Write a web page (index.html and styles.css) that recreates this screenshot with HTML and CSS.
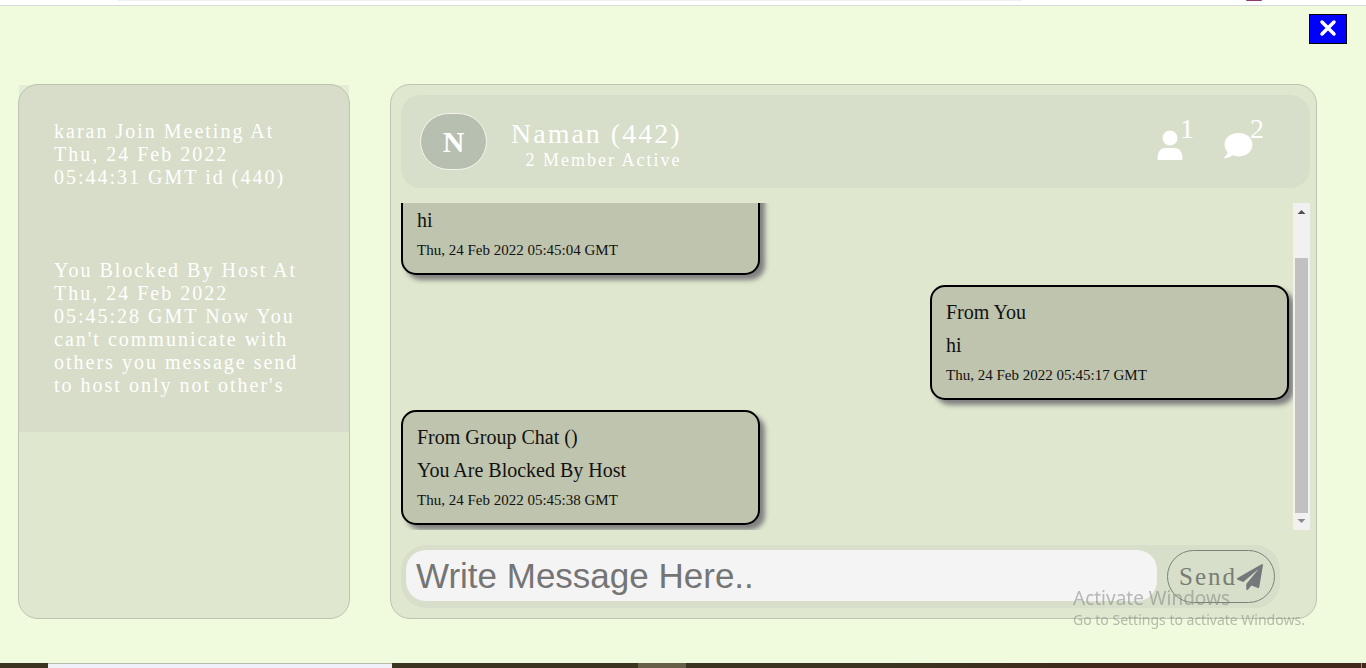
FILE: index.html
```html
<!DOCTYPE html>
<html lang="en">
<head>
<meta charset="utf-8">
<title>Meeting Chat</title>
<link rel="stylesheet" href="styles.css">
</head>
<body>
<div class="browser-edge"><span class="address-edge"></span><span class="profile-edge"></span></div>
<main class="page">
  <button class="close" type="button" aria-label="Close">
    <svg viewBox="0 0 20 20" width="20" height="20" aria-hidden="true"><path d="M4 4L16 16M16 4L4 16"/></svg>
  </button>
  <div class="columns">
    <aside class="log">
      <p class="log-item">karan Join Meeting At Thu, 24 Feb 2022 05:44:31 GMT id (440)</p>
      <p class="log-item">You Blocked By Host At Thu, 24 Feb 2022 05:45:28 GMT Now You can't communicate with others you message send to host only not other's</p>
    </aside>
    <section class="chat">
      <header class="chat-header">
        <div class="avatar">N</div>
        <div class="who">
          <h1 class="name">Naman (442)</h1>
          <p class="active">2 Member Active</p>
        </div>
        <div class="counters">
          <button class="counter" type="button" aria-label="Members: 1">
            <svg viewBox="0 0 26 30" width="26" height="30" aria-hidden="true"><circle cx="13" cy="8" r="7.5"/><path d="M.5 28.500C.5 21 4 18 9 18H17C22 18 25.500 21 25.500 28.500Q25.500 30 24 30H2Q.5 30 .5 28.500Z"/></svg><span>1</span>
          </button>
          <button class="counter" type="button" aria-label="Messages: 2">
            <svg viewBox="0 0 30 30" width="30" height="30" aria-hidden="true"><path d="M15.500 3C7.500 3 1.500 7.800 1.500 14.500C1.500 17.500 2.700 20.200 4.700 22.200C4.200 24.400 2.900 25.700 1.200 27.200Q.7 28.200 1.700 28.300C4.800 28.200 7.500 26.900 9.300 25.300C11.200 26 13.300 26.400 15.500 26.400C23.500 26.400 29.500 21.200 29.500 14.700C29.500 7.800 23.500 3 15.500 3Z"/></svg><span>2</span>
          </button>
        </div>
      </header>
      <div class="feed">
        <div class="messages">
          <article class="message">
            <p>hi</p>
            <time>Thu, 24 Feb 2022 05:45:04 GMT</time>
          </article>
          <article class="message own">
            <p>From You</p>
            <p>hi</p>
            <time>Thu, 24 Feb 2022 05:45:17 GMT</time>
          </article>
          <article class="message">
            <p>From Group Chat ()</p>
            <p>You Are Blocked By Host</p>
            <time>Thu, 24 Feb 2022 05:45:38 GMT</time>
          </article>
        </div>
        <div class="scrollbar" aria-hidden="true">
          <svg class="arrow" viewBox="0 0 17 17"><path d="M4.500 11L8.500 7L12.500 11Z"/></svg>
          <span class="track"><span class="thumb"></span></span>
          <svg class="arrow down" viewBox="0 0 17 17"><path d="M4.500 6L8.500 10L12.500 6Z"/></svg>
        </div>
      </div>
      <form class="composer">
        <input class="entry" type="text" placeholder="Write Message Here.." aria-label="Message">
        <button class="send" type="button">Send<svg viewBox="0 0 1792 1792" width="26" height="26" aria-hidden="true"><path d="M1764 11q33 24 27 64l-256 1536q-5 29-32 45-14 8-31 8-11 0-24-5l-453-185-242 295q-18 23-49 23-13 0-22-4-19-7-30.500-23.500T640 1728v-349l864-1059L435 1245 40 1083q-37-14-40-55-3-39 32-59L1696 9q15-9 32-9 20 0 36 11z"/></svg></button>
      </form>
    </section>
  </div>
</main>
<div class="taskbar"><span class="search"></span><span class="running"></span><span class="desktop"></span></div>
<div class="watermark"><p class="mark-title">Activate Windows</p><p class="mark-text">Go to Settings to activate Windows.</p></div>
</body>
</html>
```
FILE: styles.css
```css
* { box-sizing: border-box; }
body {
  margin: 0;
  height: 100vh;
  display: flex;
  flex-direction: column;
  background: #f0fadd;
  font-family: "Liberation Serif", "Times New Roman", serif;
  font-size: 20px;
  line-height: 23px;
}
p, h1 { margin: 0; font-weight: normal; }
button { font: inherit; padding: 0; cursor: pointer; }

.browser-edge {
  flex: none;
  height: 6px;
  display: flex;
  align-items: flex-start;
  padding: 0 104px 0 118px;
  justify-content: space-between;
  background: #fff;
  border-bottom: 1px solid #d9dbd8;
}
.address-edge { width: 79%; height: 1px; background: #eef0f3; }
.profile-edge { width: 16px; height: 1px; border-radius: 0 0 8px 8px; background: #8a3d68; }

.page {
  flex: 1;
  min-height: 0;
  display: flex;
  flex-direction: column;
  gap: 40px;
  padding: 8px 49px 44px 18px;
}
.close {
  flex: none;
  align-self: flex-end;
  width: 38px;
  height: 30px;
  margin-right: -30px;
  display: flex;
  align-items: center;
  justify-content: center;
  background: #00f;
  border: 1px solid #000;
}
.close svg { fill: none; stroke: #fff; stroke-width: 3.5; stroke-linecap: round; margin-bottom: 2px; }
.columns {
  flex: 1;
  min-height: 0;
  display: grid;
  grid-template-columns: 332fr 927fr;
  grid-template-rows: minmax(0, 1fr);
  gap: 40px;
}
.log, .chat {
  background: #dfe8ce;
  border: 1px solid #bdc4b2;
  border-radius: 20px;
}
.log-item {
  padding: 35px;
  background: rgba(183, 182, 181, .2);
  color: #fff;
  letter-spacing: 2px;
}

.chat {
  display: flex;
  flex-direction: column;
  gap: 15px;
  padding: 10px 6px 10px 10px;
}
.chat-header {
  flex: none;
  height: 93px;
  display: flex;
  align-items: center;
  gap: 24px;
  padding: 0 46px 0 19px;
  background: #d7dec9;
  border-radius: 20px;
  color: #fff;
}
.avatar {
  width: 67px;
  height: 57px;
  display: flex;
  align-items: center;
  justify-content: center;
  background: #b7c0b0;
  border: 1px solid #f4f6ee;
  border-radius: 30px;
  font-size: 30px;
  font-weight: bold;
}
.who { text-align: right; letter-spacing: 2px; padding-top: 4px; }
.name { font-size: 28px; line-height: 32px; }
.active { font-size: 18px; line-height: 20px; }
.counters { margin-left: auto; padding-bottom: 6px; display: flex; gap: 29px; }
.counter {
  display: flex;
  align-items: flex-end;
  height: 43px;
  background: none;
  border: 0;
  color: #fff;
}
.counter svg { fill: #fff; }
.counter span { align-self: flex-start; margin-left: -3px; font-size: 28px; line-height: 24px; }

.feed { flex: 1; min-height: 0; display: flex; }
.messages {
  flex: 1;
  display: flex;
  flex-direction: column;
  justify-content: flex-end;
  gap: 10px;
  padding: 0 4px 5px 0;
  overflow: hidden;
}
.message {
  flex: none;
  width: 359px;
  max-width: 100%;
  min-height: 115px;
  display: flex;
  flex-direction: column;
  justify-content: flex-end;
  gap: 10px;
  padding: 14px;
  background: #bec4ad;
  border: 2px solid #000;
  border-radius: 15px;
  box-shadow: 5px 5px 5px #808080;
  color: #111;
}
.own { align-self: flex-end; }
.message time { font-size: 15px; line-height: 17px; }
.scrollbar { width: 17px; display: flex; flex-direction: column; background: #f1f1f1; }
.arrow { flex: none; width: 17px; height: 17px; fill: #505050; }
.down { fill: #8b8b8b; }
.track { flex: 1; display: flex; flex-direction: column; justify-content: flex-end; padding: 0 2px; }
.thumb { height: 87%; background: #c1c1c1; }

.composer {
  flex: none;
  display: flex;
  align-items: flex-start;
  gap: 10px;
  margin-right: 30px;
  padding: 5px;
  background: #d7dec9;
  border-radius: 25px;
}
.entry {
  flex: 1;
  min-width: 0;
  height: 51px;
  padding: 0 10px;
  border: 0;
  border-radius: 20px;
  background: #f4f4f4;
  font: 35px "Liberation Sans", Arial, sans-serif;
}
.entry::placeholder { color: #757575; opacity: 1; }
.send {
  width: 108px;
  height: 53px;
  display: flex;
  align-items: center;
  justify-content: center;
  background: none;
  border: 1px solid #7c8278;
  border-radius: 27px;
  color: #787d74;
  font-size: 25px;
  letter-spacing: 2px;
}
.send svg { fill: #74787a; }

.taskbar {
  flex: none;
  height: 5px;
  display: flex;
  background: linear-gradient(90deg, #3b3420 65%, #40291b 80%);
}
.search { width: 344px; margin-left: 48px; background: #f0f0f8; border-top: 1px solid #b9bba9; }
.running { width: 48px; margin-left: 246px; background: #676049; }
.desktop { width: 1px; margin-left: auto; margin-right: 4px; background: #998f82; }

.watermark {
  position: fixed;
  right: 57px;
  bottom: 38px;
  width: 236px;
  color: rgba(130, 135, 130, .55);
  font-family: "Noto Sans", "Open Sans", sans-serif;
  white-space: nowrap;
  pointer-events: none;
}
.mark-title { font-size: 19px; line-height: 24px; }
.mark-text { font-size: 14px; line-height: 20px; }
```
